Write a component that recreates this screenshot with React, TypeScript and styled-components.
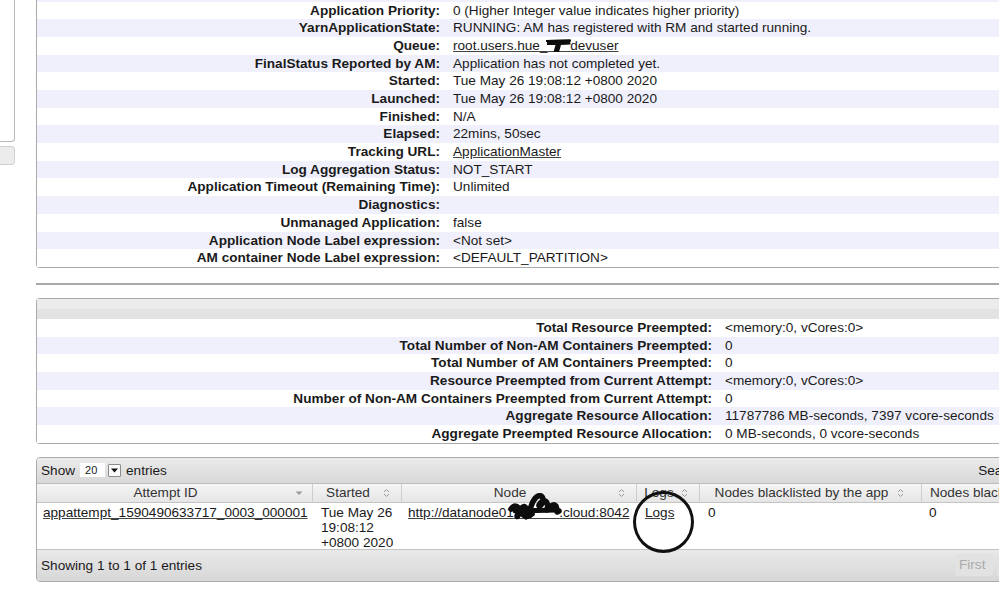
import React from "react";
import styled, { createGlobalStyle } from "styled-components";

const Global = createGlobalStyle`
  html, body { margin: 0; padding: 0; background: #fff; overflow: hidden; }
  body {
    font-family: "Liberation Sans", Arial, Helvetica, sans-serif;
    font-size: 13.6px;
    color: #1a1a1a;
  }
`;

const Page = styled.div`
  position: relative;
  display: flex;
  align-items: flex-start;
  width: 1200px;
  height: 598px;
`;

const Sidebar = styled.div`
  flex: none;
  width: 15px;
  display: flex;
  flex-direction: column;
`;

const SideBox = styled.div`
  height: 142px;
  border-right: 1px solid #b8b8b8;
  border-bottom: 1px solid #b8b8b8;
  border-bottom-right-radius: 4px;
  box-sizing: border-box;
`;

const SideButton = styled.div`
  margin-top: 4px;
  height: 19px;
  background: #ececec;
  border: 1px solid #d0d0d0;
  border-left: none;
  border-radius: 0 4px 4px 0;
  box-sizing: border-box;
`;

const Main = styled.div`
  flex: none;
  margin-left: 21px;
  margin-top: -17.1px;
  width: 1116px;
  display: flex;
  flex-direction: column;
`;

const InfoPanel = styled.div`
  border: 1px solid #aaa;
  border-right: none;
  border-radius: 4px 0 0 4px;
  background: #fff;
`;

const PanelHeader = styled.div`
  height: 20px;
  background: linear-gradient(#ececec 0%, #ececec 50%, #e3e3e3 51%, #e3e3e3 100%);
`;

const Row = styled.div<{ $odd: boolean; $label: number }>`
  display: grid;
  grid-template-columns: ${(p) => p.$label}px 1fr;
  height: 17.7px;
  line-height: 17.7px;
  background: ${(p) => (p.$odd ? "#f0f0fc" : "#fff")};
  white-space: nowrap;
`;

const Label = styled.div`
  font-weight: bold;
  text-align: right;
  padding-right: 6px;
`;

const Value = styled.div`
  padding-left: 7px;
`;

const Link = styled.a`
  color: #1a1a1a;
  text-decoration: underline;
  text-decoration-color: #444;
  text-underline-offset: 1px;
`;

const Redact = styled.span`
  position: relative;
  white-space: pre;
`;

const Blot = styled.svg<{ $l: number; $t: number }>`
  position: absolute;
  left: ${(p) => p.$l}px;
  top: ${(p) => p.$t}px;
  overflow: visible;
`;

const Divider = styled.div`
  margin-top: 15px;
  height: 2px;
  background: #a8a8a8;
`;

const Spacer = styled.div<{ $h: number }>`
  height: ${(p) => p.$h}px;
`;

const TablePanel = styled.div`
  border: 1px solid #aaa;
  border-radius: 4px;
  overflow: hidden;
`;

const Toolbar = styled.div`
  height: 25px;
  display: flex;
  align-items: center;
  padding: 0 5px 0 4px;
  background: linear-gradient(#ebebeb, #d8d8d8);
  border-bottom: 1px solid #bdbdbd;
  gap: 5px;
`;

const SelectBox = styled.span`
  display: inline-flex;
  align-items: center;
  gap: 3px;
`;

const SelectValue = styled.span`
  display: inline-block;
  width: 25px;
  height: 14px;
  line-height: 14px;
  background: #fff;
  font-size: 11px;
  padding-left: 5px;
  box-sizing: border-box;
`;

const SelectArrow = styled.span`
  display: inline-flex;
  align-items: center;
  justify-content: center;
  width: 11px;
  height: 11px;
  border: 1px solid #8c8c8c;
  background: #fafafa;
  border-radius: 1px;
`;

const SearchWrap = styled.div`
  margin-left: auto;
  display: flex;
  align-items: center;
  gap: 4px;
`;

const SearchInput = styled.span`
  display: inline-block;
  width: 115px;
  height: 16px;
  background: #fff;
  border: 1px solid #aaa;
`;

const Grid = styled.div`
  display: grid;
  grid-template-columns: 276px 89px 235px 63px 222px 229px;
`;

const HeadCell = styled.div<{ $iconRight: number }>`
  position: relative;
  height: 18px;
  line-height: 18px;
  text-align: center;
  padding-right: 18px;
  color: #333;
  background: linear-gradient(#f5f5f5, #e5e5e5);
  border-right: 1px solid #cdcdcd;
  border-bottom: 1px solid #c4c4c4;
  white-space: nowrap;
  overflow: hidden;
  & > svg {
    position: absolute;
    right: ${(p) => p.$iconRight}px;
    top: 4px;
  }
`;

const BodyCell = styled.div<{ $pl: number }>`
  height: 46px;
  padding: 2px 4px 0 ${(p) => p.$pl}px;
  line-height: 15px;
  box-sizing: border-box;
  white-space: nowrap;
  background: #fff;
`;

const Footer = styled.div`
  height: 31px;
  display: flex;
  align-items: center;
  padding: 0 0 0 4px;
  border-top: 1px solid #c4c4c4;
  background: linear-gradient(#e9e9e9, #d7d7d7);
`;

const Paging = styled.div`
  margin-left: auto;
  display: flex;
  gap: 4px;
`;

const PageButton = styled.span<{ $w: number }>`
  width: ${(p) => p.$w}px;
  height: 22px;
  line-height: 22px;
  padding-left: 4px;
  box-sizing: border-box;
  color: #aaa;
  background: #e2e2e2;
  border-radius: 2px;
  overflow: hidden;
`;

const Annotation = styled.div`
  position: absolute;
  left: 633px;
  top: 491px;
  width: 55px;
  height: 56px;
  border: 3.5px solid #111;
  border-radius: 50%;
  pointer-events: none;
`;

const SortBoth = () => (
  <svg width="7" height="10" viewBox="0 0 7 10">
    <polyline points="1,4 3.5,1.5 6,4" fill="none" stroke="#999" strokeWidth="1" />
    <polyline points="1,6 3.5,8.5 6,6" fill="none" stroke="#999" strokeWidth="1" />
  </svg>
);

const SortDesc = () => (
  <svg width="8" height="10" viewBox="0 0 8 10">
    <polygon points="0.5,3.5 7.5,3.5 4,7" fill="#9a9a9a" />
  </svg>
);

type InfoRow = [string, React.ReactNode];

const queueValue = (
  <Link>
    root.users.hue_
    <Redact>
      {"\u00a0\u00a0\u00a0\u00a0\u00a0\u00a0"}
      <Blot $l={-1} $t={0} width="26" height="16" viewBox="0 0 26 16">
        <path d="M1 2 L24 1.5 L24.5 6.5 L15 7 L13 14 L7.5 14 L9.5 7 L1 7 Z" fill="#0d0d0d" />
        <path d="M0 3 L25 2.5" stroke="#0d0d0d" strokeWidth="2" />
      </Blot>
    </Redact>
    devuser
  </Link>
);

const appRows: InfoRow[] = [
  ["Application Tags:", ""],
  ["Application Priority:", "0 (Higher Integer value indicates higher priority)"],
  ["YarnApplicationState:", "RUNNING: AM has registered with RM and started running."],
  ["Queue:", queueValue],
  ["FinalStatus Reported by AM:", "Application has not completed yet."],
  ["Started:", "Tue May 26 19:08:12 +0800 2020"],
  ["Launched:", "Tue May 26 19:08:12 +0800 2020"],
  ["Finished:", "N/A"],
  ["Elapsed:", "22mins, 50sec"],
  ["Tracking URL:", <Link>ApplicationMaster</Link>],
  ["Log Aggregation Status:", "NOT_START"],
  ["Application Timeout (Remaining Time):", "Unlimited"],
  ["Diagnostics:", ""],
  ["Unmanaged Application:", "false"],
  ["Application Node Label expression:", "<Not set>"],
  ["AM container Node Label expression:", "<DEFAULT_PARTITION>"],
];

const resourceRows: InfoRow[] = [
  ["Total Resource Preempted:", "<memory:0, vCores:0>"],
  ["Total Number of Non-AM Containers Preempted:", "0"],
  ["Total Number of AM Containers Preempted:", "0"],
  ["Resource Preempted from Current Attempt:", "<memory:0, vCores:0>"],
  ["Number of Non-AM Containers Preempted from Current Attempt:", "0"],
  ["Aggregate Resource Allocation:", "11787786 MB-seconds, 7397 vcore-seconds"],
  ["Aggregate Preempted Resource Allocation:", "0 MB-seconds, 0 vcore-seconds"],
];

const nodeValue = (
  <Link>
    http://datanode01
    <Redact>
      {"\u00a0\u00a0\u00a0\u00a0\u00a0\u00a0\u00a0\u00a0\u00a0\u00a0\u00a0\u00a0"}
      <Blot $l={-5} $t={-13} width="54" height="32" viewBox="0 0 54 32">
        <path
          d="M2 17 C5 13 9 13 10 18 C11 24 6 27 9 22 C12 16 15 12 17 16 C19 21 15 27 18 24 C21 20 22 12 25 8 C28 3 33 2 34 7 C35 12 29 16 30 13 C32 9 36 7 38 11 C40 16 36 20 39 17 C42 14 45 11 47 14 C49 18 46 22 50 19"
          fill="none"
          stroke="#0d0d0d"
          strokeWidth="5.5"
          strokeLinecap="round"
          strokeLinejoin="round"
        />
        <path d="M6 19 L48 18" stroke="#0d0d0d" strokeWidth="5" strokeLinecap="round" />
        <path d="M12 22 C16 26 20 26 24 22" fill="none" stroke="#0d0d0d" strokeWidth="4" strokeLinecap="round" />
      </Blot>
    </Redact>
    .cloud:8042
  </Link>
);

const heads: { title: string; icon: "desc" | "both"; right: number }[] = [
  { title: "Attempt ID", icon: "desc", right: 9 },
  { title: "Started", icon: "both", right: 11 },
  { title: "Node", icon: "both", right: 11 },
  { title: "Logs", icon: "both", right: 11 },
  { title: "Nodes blacklisted by the app", icon: "both", right: 17 },
  { title: "Nodes blacklisted by the system", icon: "both", right: 11 },
];

const pages: [string, number][] = [
  ["First", 38],
  ["Previous", 52],
  ["1", 18],
  ["Next", 34],
  ["Last", 38],
];

export default function App() {
  return (
    <>
      <Global />
      <Page>
        <Sidebar>
          <SideBox />
          <SideButton />
        </Sidebar>
        <Main>
          <InfoPanel>
            {appRows.map(([k, v], i) => (
              <Row key={k} $odd={i % 2 === 0} $label={409}>
                <Label>{k}</Label>
                <Value>{v}</Value>
              </Row>
            ))}
          </InfoPanel>
          <Divider />
          <Spacer $h={13} />
          <InfoPanel>
            <PanelHeader />
            {resourceRows.map(([k, v], i) => (
              <Row key={k} $odd={i % 2 === 1} $label={681}>
                <Label>{k}</Label>
                <Value>{v}</Value>
              </Row>
            ))}
          </InfoPanel>
          <Spacer $h={13} />
          <TablePanel>
            <Toolbar>
              <span>Show</span>
              <SelectBox>
                <SelectValue>20</SelectValue>
                <SelectArrow>
                  <svg width="7" height="5" viewBox="0 0 7 5">
                    <polygon points="0,0.5 7,0.5 3.5,4.5" fill="#111" />
                  </svg>
                </SelectArrow>
              </SelectBox>
              <span>entries</span>
              <SearchWrap>
                <span>Search:</span>
                <SearchInput />
              </SearchWrap>
            </Toolbar>
            <Grid>
              {heads.map((h) => (
                <HeadCell key={h.title} $iconRight={h.right}>
                  {h.title}
                  {h.icon === "desc" ? <SortDesc /> : <SortBoth />}
                </HeadCell>
              ))}
              <BodyCell $pl={6}>
                <Link>appattempt_1590490633717_0003_000001</Link>
              </BodyCell>
              <BodyCell $pl={8}>
                Tue May 26
                <br />
                19:08:12
                <br />
                +0800 2020
              </BodyCell>
              <BodyCell $pl={6}>{nodeValue}</BodyCell>
              <BodyCell $pl={8}>
                <Link>Logs</Link>
              </BodyCell>
              <BodyCell $pl={8}>0</BodyCell>
              <BodyCell $pl={7}>0</BodyCell>
            </Grid>
            <Footer>
              <span>Showing 1 to 1 of 1 entries</span>
              <Paging>
                {pages.map(([t, w]) => (
                  <PageButton key={t} $w={w}>
                    {t}
                  </PageButton>
                ))}
              </Paging>
            </Footer>
          </TablePanel>
        </Main>
        <Annotation />
      </Page>
    </>
  );
}
